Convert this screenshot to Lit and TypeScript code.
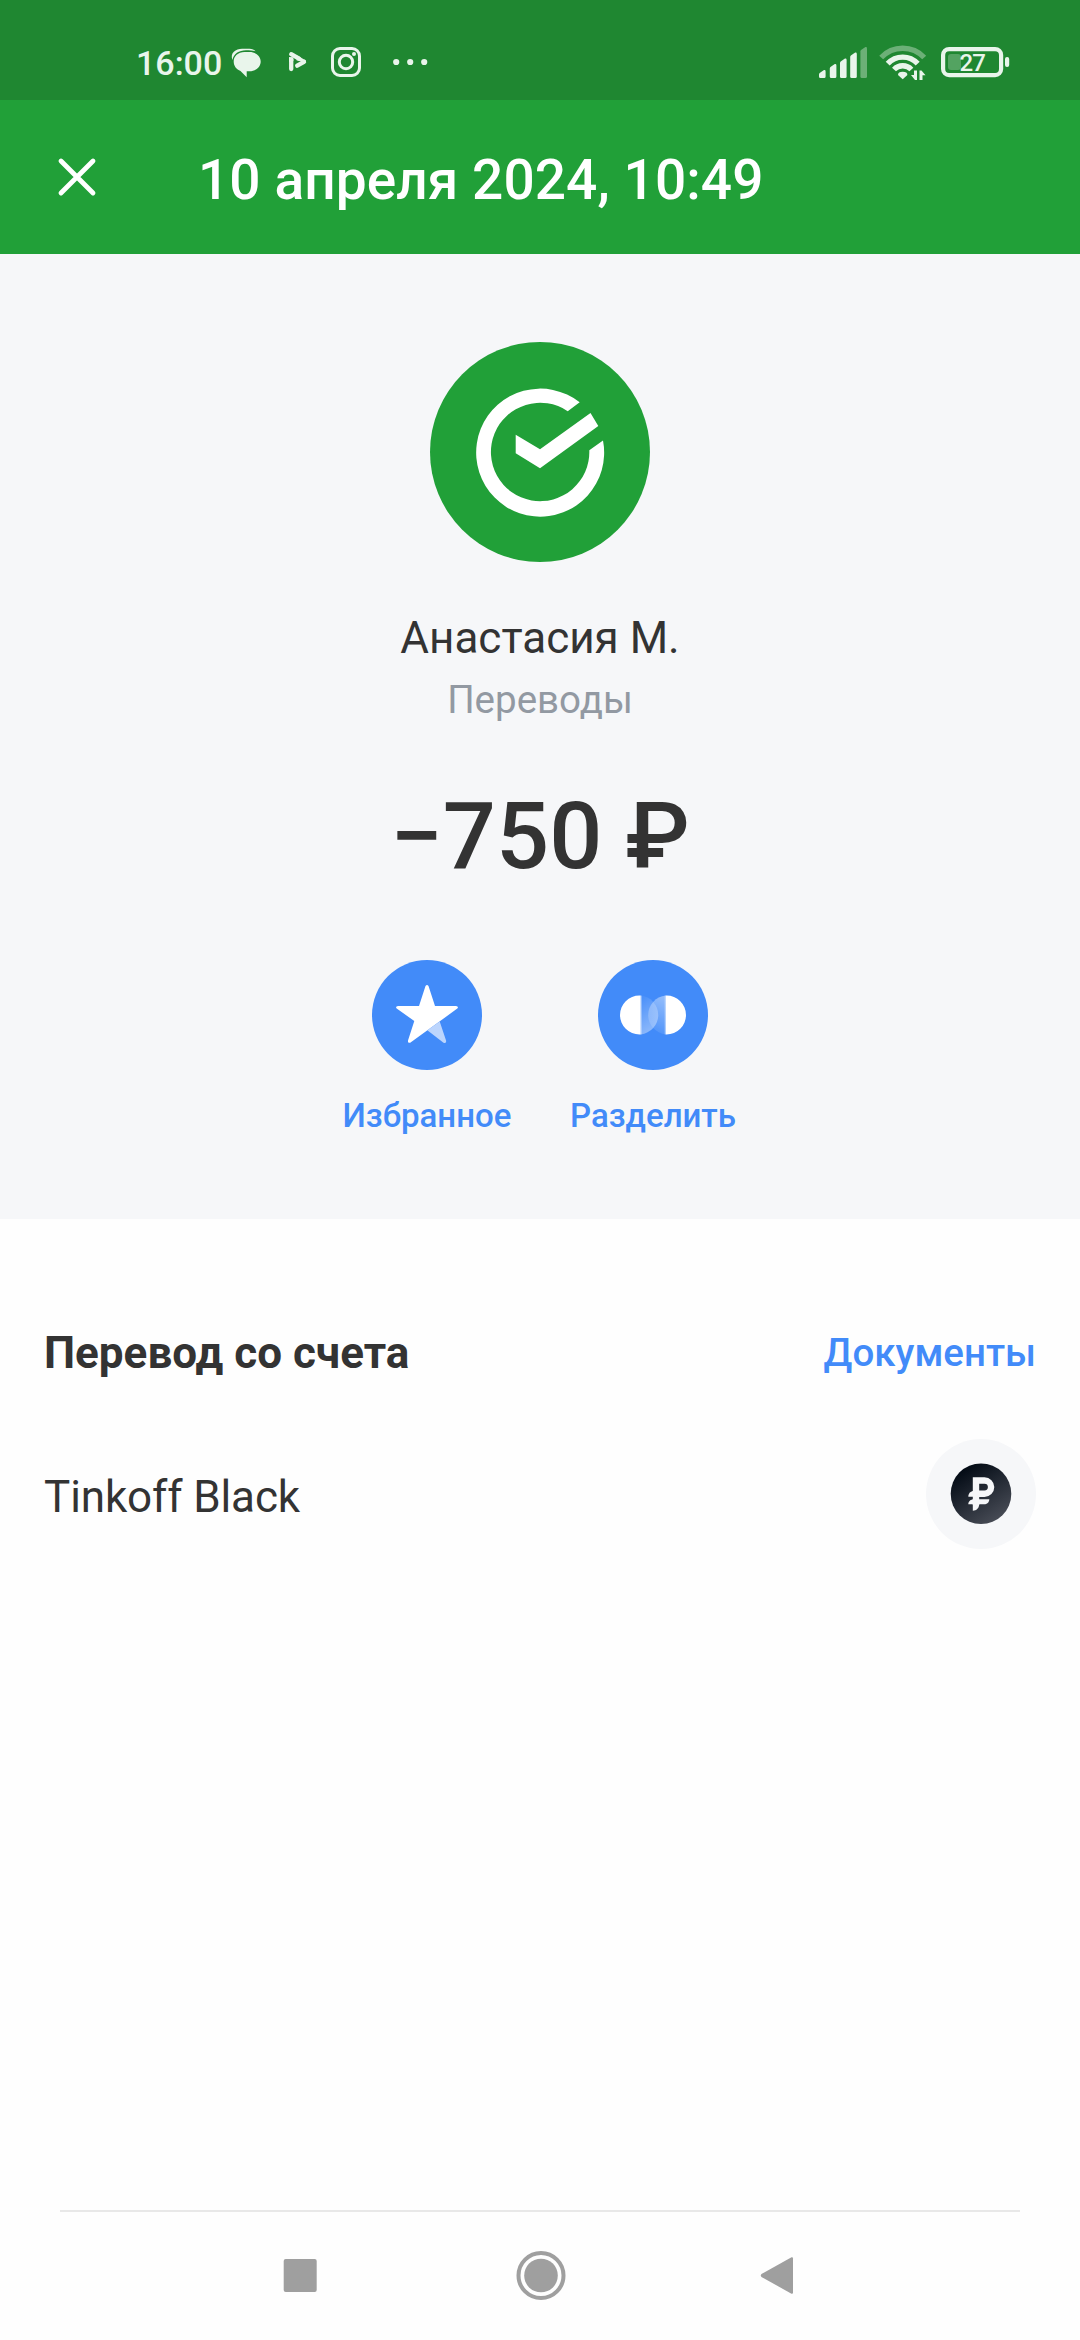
import { LitElement, html, css, svg } from "lit";
import { customElement, property } from "lit/decorators.js";

@customElement("status-bar")
class StatusBar extends LitElement {
  static styles = css`
    :host {
      display: flex;
      justify-content: space-between;
      height: 100px;
      background: #1f8731;
      color: #e9f5eb;
      fill: #e9f5eb;
    }
    .group {
      display: flex;
    }
    .left {
      padding-left: 136px;
    }
    .right {
      padding-right: 67px;
    }
    .time {
      width: 88px;
      font-size: 34px;
      font-weight: 500;
      line-height: 40px;
      padding-top: 43px;
      white-space: nowrap;
    }
    svg {
      display: block;
      height: 100px;
    }
    .line {
      fill: none;
      stroke: #e9f5eb;
    }
    .faint {
      opacity: 0.38;
    }
    .level {
      font-size: 24px;
      font-weight: 500;
      letter-spacing: -0.8px;
    }
  `;

  render() {
    const bars = [
      [819, 70],
      [829.8, 64],
      [840, 58.5],
      [850.2, 52.5],
      [860.4, 47],
    ];
    return html`
      <div class="group left">
        <div class="time">16:00</div>
        <svg width="46" viewBox="224 0 46 100">
          <path d="M232.600 60C229.500 53 236 48.800 242 48.800H249.500C252 48.800 254.500 50 255.500 51.300C252.500 50.300 250 50.300 246 50.300C239 50.300 233.300 54 232.600 60Z" />
          <path d="M244.500 52H249.500C256 52 260.700 56.300 260.700 61.500C260.700 66.700 256 71.300 249.500 71.300H246.700V77.300L240.500 71C236.500 69.500 233.700 66 233.700 61.500C233.700 56.300 238 52 244.500 52Z" />
        </svg>
        <svg width="50" viewBox="270 0 50 100">
          <g class="line" stroke-width="4.300" stroke-linecap="round">
            <path d="M291.200 59.500V69" />
            <path d="M291.200 54.200L299 58.700" />
            <path d="M304 61.800L297.200 65.700" />
          </g>
          <path d="M289 57L293.400 57.500V61L289 62ZM297.500 55.500L306.200 60.700L303 62L296.500 60.300Z" />
        </svg>
        <svg width="60" viewBox="320 0 60 100">
          <g class="line" stroke-width="3">
            <rect x="332.500" y="48.500" width="27" height="27" rx="7.500" />
            <circle cx="346" cy="62" r="6.700" />
          </g>
          <circle cx="354" cy="54" r="2" />
        </svg>
        <svg width="60" viewBox="380 0 60 100">
          <circle cx="396.200" cy="62" r="3.100" />
          <circle cx="410.200" cy="62" r="3.100" />
          <circle cx="424.200" cy="62" r="3.100" />
        </svg>
      </div>
      <div class="group right">
        <svg width="60" viewBox="813 0 60 100">
          ${bars.map(
            ([x, y], i) => svg`<path class=${i === 4 ? "faint" : ""}
              d="M${x} ${y + 4.5}Q${x} ${y + 3.5} ${x + 1} ${y + 2.8}L${x + 5} ${y}Q${x + 6.6} ${y - 0.4} ${x + 6.6} ${y + 1.4}V76.500Q${x + 6.6} 78 ${x + 5.2} 78H${x + 1.4}Q${x} 78 ${x} 76.500Z" />`
          )}
        </svg>
        <svg width="60" viewBox="873 0 60 100">
          <g class="line" stroke-width="5.400">
            <path class="faint" d="M881.200 57.500A29.500 29.500 0 0 1 924.200 57.500" />
            <path d="M887.700 63.700A20.500 20.500 0 0 1 917.700 63.700" />
            <path d="M894 69.500A12 12 0 0 1 911.400 69.500" />
          </g>
          <path d="M902.700 79.200L898 75Q898 71.800 902.700 71.800Q907.400 71.800 907.400 75Z" />
          <path d="M914 70.500H917V80H915L911 75H914ZM919.500 80V70.500H921.500L925.500 75.200H922.500V80Z" />
        </svg>
        <svg width="80" viewBox="933 0 80 100">
          <rect class="line" x="943.100" y="49.100" width="58" height="26" rx="6" stroke-width="4.200" />
          <rect x="948" y="54" width="13" height="16" rx="3" opacity=".26" />
          <rect x="1005" y="57" width="4.200" height="10" rx="2" />
          <text class="level" x="959.500" y="71">27</text>
        </svg>
      </div>
    `;
  }
}

@customElement("title-bar")
class TitleBar extends LitElement {
  @property() heading = "";

  static styles = css`
    :host {
      display: flex;
      align-items: center;
      height: 154px;
      background: #21a038;
      color: #fff;
    }
    .close {
      display: block;
      width: 44px;
      height: 44px;
      margin-left: 55px;
      margin-right: 99px;
      stroke: #fff;
      stroke-width: 4.8;
      stroke-linecap: round;
    }
    .heading {
      margin: 6px 0 0;
      font-size: 55px;
      font-weight: 500;
      line-height: 66px;
      letter-spacing: 0.08px;
      white-space: nowrap;
    }
  `;

  render() {
    return html`
      <svg class="close" viewBox="0 0 44 44"><path d="M6 6L38 38M38 6L6 38" /></svg>
      <h1 class="heading">${this.heading}</h1>
    `;
  }
}

@customElement("transfer-summary")
class TransferSummary extends LitElement {
  static styles = css`
    :host {
      display: flex;
      flex-direction: column;
      align-items: center;
      box-sizing: border-box;
      height: 965px;
      padding-top: 88px;
      background: #f6f7f9;
      color: #333;
      text-align: center;
      white-space: nowrap;
    }
    svg {
      display: block;
    }
    .name {
      margin-top: 50px;
      font-size: 44px;
      line-height: 52px;
    }
    .category {
      margin-top: 13px;
      font-size: 38.5px;
      line-height: 46px;
      color: #9299a2;
    }
    .amount {
      margin-top: 58px;
      font-size: 93.5px;
      line-height: 110px;
      font-weight: 500;
    }
    .actions {
      display: grid;
      grid-template-columns: 226px 226px;
      margin-top: 69px;
    }
    .action {
      display: flex;
      flex-direction: column;
      align-items: center;
      gap: 26px;
      font-size: 33px;
      line-height: 40px;
      font-weight: 500;
      color: #428bf9;
    }
  `;

  render() {
    return html`
      <svg width="220" height="220" viewBox="0 0 220 220">
        <circle cx="110" cy="110" r="110" fill="#21a038" />
        <g fill="#fff">
          <path d="M149.700 60.300A64 64 0 1 0 173 98.500L159.300 108.300A49.200 49.200 0 1 1 137.700 69.200Z" />
          <path d="M85.700 92.700L110 107.300L160.500 71L168.300 84L110 126.300L85.700 111.300Z" />
        </g>
      </svg>
      <div class="name">Анастасия М.</div>
      <div class="category">Переводы</div>
      <div class="amount">−750 ₽</div>
      <div class="actions">
        <div class="action">
          <svg width="110" height="110" viewBox="0 0 110 110">
            <circle cx="55" cy="55" r="55" fill="#428bf9" />
            <path fill="#fff" d="M53.500 26Q55 24 56.500 26L63 46H84Q87 46.300 85.300 48.600L38.200 82.700Q35.500 83.500 36 80.500L42.300 61L24.700 48.600Q23 46.300 26 46H47Z" />
            <path fill="#bcd5fd" d="M67.700 61.400L74.200 81Q74.300 83.700 71.500 82.700L55.300 70.300Z" />
          </svg>
          <span>Избранное</span>
        </div>
        <div class="action">
          <svg width="110" height="110" viewBox="0 0 110 110">
            <defs>
              <linearGradient id="fadeLeft" x1=".3" y1="0" x2=".6" y2="1">
                <stop offset="0" stop-color="#fff" stop-opacity=".06" />
                <stop offset="1" stop-color="#fff" stop-opacity=".42" />
              </linearGradient>
              <linearGradient id="fadeRight" x1=".6" y1="0" x2=".4" y2="1">
                <stop offset="0" stop-color="#fff" stop-opacity=".42" />
                <stop offset="1" stop-color="#fff" stop-opacity=".06" />
              </linearGradient>
            </defs>
            <circle cx="55" cy="55" r="55" fill="#428bf9" />
            <path fill="#fff" d="M42.700 35.500H41.500A19.500 19.500 0 0 0 41.500 74.500H42.700Z" />
            <path fill="#fff" d="M67.700 35.500H68.500A19.500 19.500 0 0 1 68.500 74.500H67.700Z" />
            <path fill="url(#fadeLeft)" d="M42.700 35.600A19.500 19.500 0 0 1 42.700 74.400Z" />
            <path fill="url(#fadeRight)" d="M67.700 35.600A19.500 19.500 0 0 0 67.700 74.400Z" />
            <path d="M43.200 35.600V74.400M67.200 35.600V74.400" stroke="#fff" stroke-opacity=".45" />
          </svg>
          <span>Разделить</span>
        </div>
      </div>
    `;
  }
}

@customElement("account-section")
class AccountSection extends LitElement {
  static styles = css`
    :host {
      display: block;
      padding: 108px 44px 0;
      color: #333;
      white-space: nowrap;
    }
    .head,
    .account {
      display: flex;
      align-items: center;
      justify-content: space-between;
    }
    .title {
      margin: 0;
      font-size: 44px;
      font-weight: 700;
      line-height: 52px;
    }
    .link {
      font-size: 38.5px;
      font-weight: 500;
      line-height: 46px;
      color: #428bf9;
    }
    .account {
      margin-top: 60px;
    }
    .label {
      padding-top: 6px;
      font-size: 44px;
      line-height: 52px;
      letter-spacing: -0.12px;
    }
    svg {
      display: block;
    }
  `;

  render() {
    return html`
      <div class="head">
        <h2 class="title">Перевод со счета</h2>
        <span class="link">Документы</span>
      </div>
      <div class="account">
        <span class="label">Tinkoff Black</span>
        <svg width="110" height="110" viewBox="0 0 110 110">
          <defs>
            <linearGradient id="coin" x1=".2" y1=".1" x2=".75" y2=".95">
              <stop offset="0" stop-color="#030b15" />
              <stop offset="1" stop-color="#474b55" />
            </linearGradient>
          </defs>
          <circle cx="55" cy="55" r="55" fill="#f6f7f9" />
          <circle cx="55" cy="54.800" r="30.300" fill="url(#coin)" />
          <path fill="none" stroke="#f6f7f9" stroke-width="6.400" d="M50 66V41.500H58.500A6.600 6.600 0 0 1 58.500 54.700H47" />
          <g fill="#f6f7f9">
            <path d="M46.800 65H53.200C53.200 69 50.500 71.700 46.800 71.700Z" />
            <path d="M42.300 57.800C42.300 54.300 44.500 52 48 52V57.800Z" />
            <path d="M42.300 65.300C42.300 62.500 44.500 60.300 48 60.300H63.300C63.300 63.300 61 65.300 58 65.300Z" />
          </g>
        </svg>
      </div>
    `;
  }
}

@customElement("nav-bar")
class NavBar extends LitElement {
  static styles = css`
    :host {
      display: block;
      height: 130px;
      padding: 0 60px;
    }
    .rule {
      height: 2px;
      background: #e8e8e8;
    }
    .keys {
      display: flex;
      justify-content: space-between;
      padding: 39px 214px 0 215px;
      fill: #9f9f9f;
    }
    svg {
      display: block;
    }
  `;

  render() {
    return html`
      <div class="rule"></div>
      <div class="keys">
        <svg width="50" height="50" viewBox="0 0 50 50"><rect x="8.700" y="8" width="33" height="33" rx="2" /></svg>
        <svg width="50" height="50" viewBox="0 0 50 50">
          <circle cx="25" cy="24.500" r="22.500" fill="none" stroke="#9f9f9f" stroke-width="4" />
          <circle cx="25" cy="24.500" r="16.800" />
        </svg>
        <svg width="50" height="50" viewBox="4 0 50 50"><path d="M9.500 26Q8 24.500 9.500 23L39.500 6.300Q41 5.800 41 7.500V41.500Q41 43.200 39.500 42.700Z" /></svg>
      </div>
    `;
  }
}

@customElement("app-root")
class AppRoot extends LitElement {
  static styles = css`
    :host {
      display: flex;
      flex-direction: column;
      width: 1080px;
      height: 2340px;
      overflow: hidden;
      background: #fefefe;
      font-family: Roboto, "Noto Sans", sans-serif;
    }
    .section {
      flex: 1;
    }
  `;

  render() {
    return html`
      <status-bar></status-bar>
      <title-bar heading="10 апреля 2024, 10:49"></title-bar>
      <transfer-summary></transfer-summary>
      <account-section class="section"></account-section>
      <nav-bar></nav-bar>
    `;
  }
}
